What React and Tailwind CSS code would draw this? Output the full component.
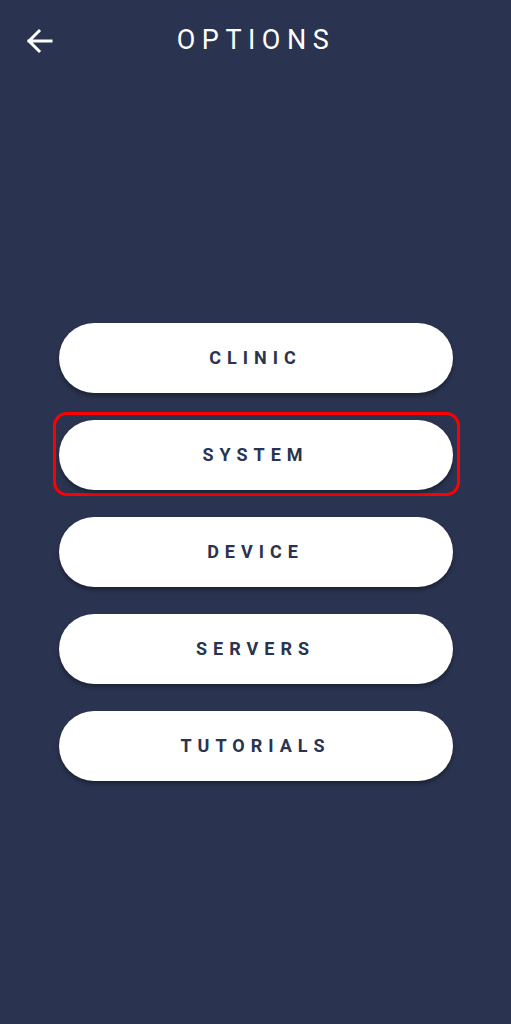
import React from "react";

function Btn({ label, highlight }) {
  return (
    <div className="relative w-[394px] h-[70px]">
      {highlight && (
        <div className="absolute -left-[6px] -right-[7px] -top-[8px] -bottom-[6px] border-[3px] border-[#ff0000] rounded-[14px]" />
      )}
      <button className="relative w-full h-full rounded-full bg-white shadow-[0_3px_4px_rgba(0,0,0,0.35)] flex items-center justify-center pb-[2px]">
        <span className="text-[18px] font-bold tracking-[6px] text-[#2a3450]" style={{ fontFamily: "Roboto, sans-serif" }}>
          {label}
        </span>
      </button>
    </div>
  );
}

export default function App() {
  return (
    <div className="w-[511px] h-[1024px] bg-[#2a3450] overflow-hidden" style={{ fontFamily: "Roboto, sans-serif" }}>
      <header className="relative h-[80px] flex items-center justify-center">
        <svg className="absolute left-[24px] top-[27px]" width="30" height="28" viewBox="0 0 30 28" fill="none">
          <path d="M27 14H5M15 4L5 14l10 10" stroke="white" strokeWidth="3" strokeLinecap="square" />
        </svg>
        <h1 className="text-[27px] font-normal tracking-[6.5px] text-white pl-[1px]">OPTIONS</h1>
      </header>
      <div className="flex flex-col items-center gap-[27px] pt-[243px]">
        <Btn label="CLINIC" />
        <Btn label="SYSTEM" highlight />
        <Btn label="DEVICE" />
        <Btn label="SERVERS" />
        <Btn label="TUTORIALS" />
      </div>
    </div>
  );
}
